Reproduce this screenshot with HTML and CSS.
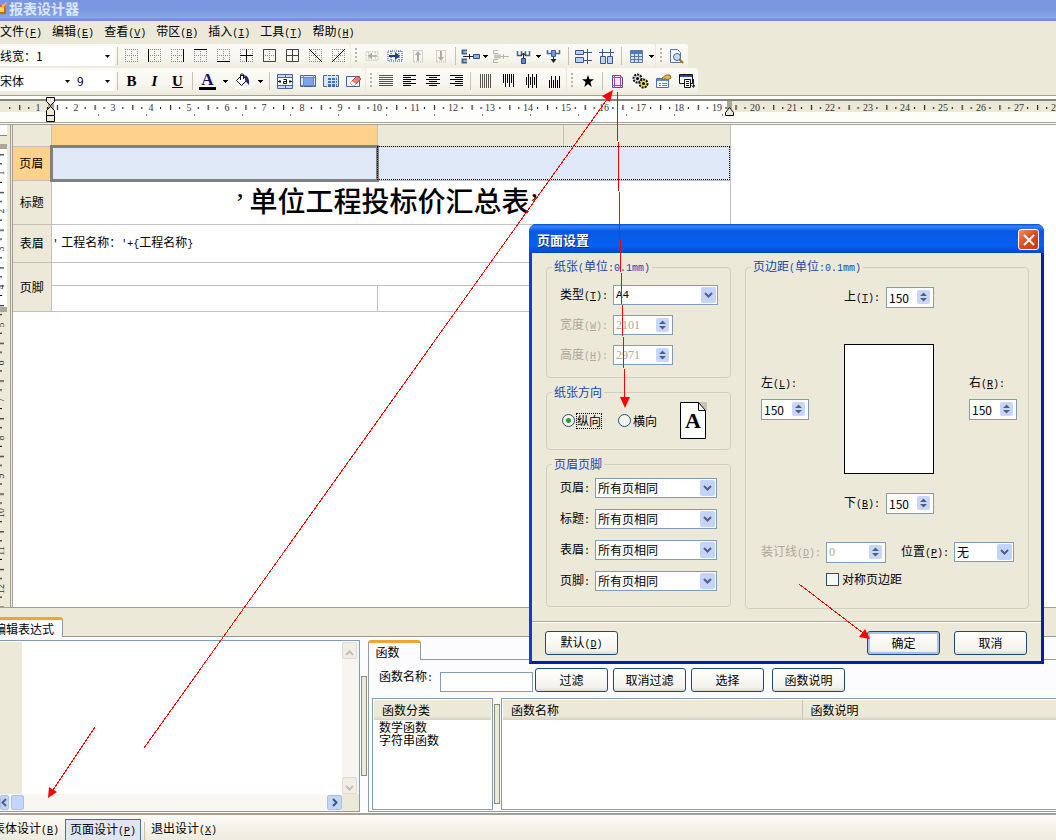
FILE: index.html
```html
<!DOCTYPE html>
<html lang="zh-CN">
<head>
<meta charset="utf-8">
<title>报表设计器</title>
<link rel="stylesheet" href="styles.css">
</head>
<body>
<svg class="defs" aria-hidden="true">
  <defs>
    <symbol id="dots" viewBox="0 0 14 14"><path d="M0 .5H14M0 6.5H14M0 12.5H14M.5 0V13M6.5 0V13M12.5 0V13" stroke="#888" stroke-dasharray="1 1" fill="none"/></symbol>
    <symbol id="tri" viewBox="0 0 5 3"><path d="M0 0H5V1H4V2H3V3H2V2H1V1H0Z"/></symbol>
    <symbol id="spin" viewBox="0 0 13 14"><path d="M3 6 6.500 2.500 10 6M3 8 6.500 11.500 10 8" fill="#4d6185"/></symbol>
    <symbol id="insert" viewBox="0 0 16 14"><path d="M1 2H15V12H1ZM4 2V12M12 2V12" stroke="currentColor" stroke-dasharray="1 1" fill="none"/><path d="M2 6H8V3L13 7 8 11V8H2Z" fill="currentColor"/></symbol>
    <symbol id="cells" viewBox="0 0 16 14"><path d="M.5 1.500H15.500V12.500H.5Z" fill="#dce8fa" stroke="#46628f"/></symbol>
  </defs>
</svg>

<div class="app">
  <header class="titlebar">
    <svg width="8" height="14" viewBox="0 0 8 14"><path d="M0 4H6V13H0Z" fill="#c46a17"/><path d="M0 6H4V11H0Z" fill="#ffd45e"/><path d="M1 5 6 1 7 3 3 7Z" fill="#ffb02e"/></svg>
    <h1>报表设计器</h1>
  </header>

  <nav class="menubar">
    <button>文件<span class="lat">(<u>F</u>)</span></button>
    <button>编辑<span class="lat">(<u>E</u>)</span></button>
    <button>查看<span class="lat">(<u>V</u>)</span></button>
    <button>带区<span class="lat">(<u>B</u>)</span></button>
    <button>插入<span class="lat">(<u>I</u>)</span></button>
    <button>工具<span class="lat">(<u>T</u>)</span></button>
    <button>帮助<span class="lat">(<u>H</u>)</span></button>
  </nav>

  <div class="toolrow">
    <div class="toolbar">
      <select class="flat line-width" aria-label="线宽"><option>线宽：1</option></select>
      <i class="sep small"></i>
      <button class="tb" aria-label="无边框"><svg width="14" height="14"><use href="#dots"/></svg></button>
      <button class="tb" aria-label="左边框"><svg width="14" height="14"><use href="#dots"/><path d="M.5 0V13" stroke="#000"/></svg></button>
      <button class="tb" aria-label="右边框"><svg width="14" height="14"><use href="#dots"/><path d="M12.500 0V13" stroke="#000"/></svg></button>
      <button class="tb" aria-label="上边框"><svg width="14" height="14"><use href="#dots"/><path d="M0 .5H13" stroke="#000"/></svg></button>
      <button class="tb" aria-label="下边框"><svg width="14" height="14"><use href="#dots"/><path d="M0 12.500H13" stroke="#000"/></svg></button>
      <button class="tb" aria-label="内边框"><svg width="14" height="14"><use href="#dots"/><path d="M0 6.500H13M6.500 0V13" stroke="#000"/></svg></button>
      <button class="tb" aria-label="外边框"><svg width="14" height="14"><use href="#dots"/><path d="M.5 .5H12.500V12.500H.5Z" fill="none" stroke="#444"/></svg></button>
      <button class="tb" aria-label="全部边框"><svg width="14" height="14"><path d="M.5 .5H12.500V12.500H.5ZM0 6.500H13M6.500 0V13" fill="none" stroke="#444"/></svg></button>
      <button class="tb" aria-label="左斜线"><svg width="14" height="14"><use href="#dots"/><path d="M0 0 13 13" stroke="#000"/></svg></button>
      <button class="tb" aria-label="右斜线"><svg width="14" height="14"><use href="#dots"/><path d="M13 0 0 13" stroke="#000"/></svg></button>
    </div>
    <div class="toolbar">
      <i class="grip"></i>
      <button class="tb off" aria-label="左移"><svg width="14" height="12"><g transform="matrix(-1 0 0 1 14 0)"><use href="#insert" width="14" height="12"/></g></svg></button>
      <button class="tb blue" aria-label="右移"><svg width="16" height="14"><use href="#insert"/></svg></button>
      <button class="tb off" aria-label="上移"><svg width="12" height="14"><path d="M1.500 1.500H10.500V13H1.500Z" stroke="#aaa" stroke-dasharray="1 1" fill="none"/><path d="M6 2 9 6H7V12H5V6H3Z" fill="#aaa"/></svg></button>
      <button class="tb off" aria-label="下移"><svg width="12" height="14"><path d="M1.500 1.500H10.500V13H1.500Z" stroke="#aaa" stroke-dasharray="1 1" fill="none"/><path d="M6 12 9 8H7V2H5V8H3Z" fill="#aaa"/></svg></button>
      <i class="sep"></i>
      <button class="tb" aria-label="拆分列"><svg width="19" height="15"><path d="M6 1.500H1.500V4.500H6M6 10.500H1.500V13.500H6" fill="none" stroke="#46628f" stroke-width="2"/><path d="M2 7.500H12M8.500 5V10" stroke="#222"/><path d="M12.500 5.500H18.500V9.500H12.500Z" fill="#8fb0ea" stroke="#2f4f8c"/></svg></button>
      <button class="drop" aria-label="拆分列选项"><svg width="5" height="3"><use href="#tri"/></svg></button>
      <button class="tb off" aria-label="合并列"><svg width="17" height="15"><path d="M6 1.500H1.500V4.500H6M6 10.500H1.500V13.500H6M8 7.500H17M11.500 5V10" fill="none" stroke="#b5b3aa"/><path d="M2 5.500H9V9.500H2Z" fill="#c9c7bd"/></svg></button>
      <button class="tb" aria-label="拆分行"><svg width="15" height="15"><path d="M1.500 2V6.500H5.500V2M9.500 2V6.500H13.500V2" fill="none" stroke="#46628f" stroke-width="1.500"/><path d="M7.500 4V10M5 7 7.500 4 10 7" fill="none" stroke="#222"/><path d="M5.500 9.500H9.500V14.500H5.500Z" fill="#5e86d2" stroke="#2c4470"/></svg></button>
      <button class="drop" aria-label="拆分行选项"><svg width="5" height="3"><use href="#tri"/></svg></button>
      <button class="tb" aria-label="合并行"><svg width="15" height="15"><path d="M1.500 1V4.500H5.500M13.500 1V4.500H9.500" fill="none" stroke="#46628f" stroke-width="1.500"/><path d="M5.500 1.500H9.500V7.500H5.500Z" fill="#6f95dc" stroke="#3c60a8"/><path d="M7.500 8V12" stroke="#222"/><path d="M4.500 10H10.500L7.500 14Z" fill="#222"/></svg></button>
      <i class="sep"></i>
      <button class="tb" aria-label="平均列宽"><svg width="17" height="15"><path d="M.5 1.500H8.500V5.500H.5ZM.5 8.500H8.500V13.500H.5Z" fill="#bcd1f5" stroke="#3a5684"/><path d="M12.500 0V15M9 3.500H17M9 11.500H17" stroke="#3a5684" fill="none"/></svg></button>
      <button class="tb" aria-label="平均行高"><svg width="15" height="15"><path d="M1.500 7.500H6.500V14.500H1.500ZM8.500 7.500H13.500V14.500H8.500Z" fill="#bcd1f5" stroke="#3a5684"/><path d="M0 3.500H15M3.500 0V7M11.500 0V7" stroke="#3a5684"/></svg></button>
      <i class="sep"></i>
      <button class="tb" aria-label="表格"><svg width="14" height="13"><path d="M.5 .5H12.500V12.500H.5Z" fill="#cfdff8" stroke="#5d779f"/><path d="M1 3.500H12M1 6.500H12M1 9.500H12M4.500 1V12M8.500 1V12" stroke="#5d779f"/><path d="M1 1H12V3H1Z" fill="#4f79c4"/></svg></button>
      <button class="drop" aria-label="表格选项"><svg width="5" height="3"><use href="#tri"/></svg></button>
    </div>
    <div class="toolbar">
      <i class="grip"></i>
      <button class="tb" aria-label="打印预览"><svg width="15" height="15"><path d="M1.500 .5H8.500L11.500 3.500V13.500H1.500Z" fill="#f4f8ff" stroke="#5b7299"/><circle cx="8" cy="8" r="3.500" fill="#bfe0f2" stroke="#4b6385"/><path d="M10.500 10.500 14 14" stroke="#a3701c" stroke-width="2"/></svg></button>
    </div>
  </div>

  <div class="toolrow second">
    <div class="toolbar">
      <select class="flat font-name" aria-label="字体"><option>宋体</option></select>
      <select class="flat font-size" aria-label="字号"><option>9</option></select>
      <i class="sep small"></i>
      <button class="tb glyph bold">B</button>
      <button class="tb glyph italic">I</button>
      <button class="tb glyph under">U</button>
      <i class="sep"></i>
      <button class="tb glyph color">A</button>
      <button class="drop wide" aria-label="字体颜色选项"><svg width="5" height="3"><use href="#tri"/></svg></button>
      <button class="tb" aria-label="填充颜色"><svg width="16" height="16"><path d="M1.500 7.500 7 2 12 7 6.500 12.500Z" fill="#fff" stroke="#112"/><path d="M5.500 7V1.500Q7 0 8.500 1.500V6" fill="none" stroke="#112"/><path d="M9 2Q15 3 14 12L10.500 8Z" fill="#20286e"/><path d="M0 13H15V16H0Z" fill="#fff"/></svg></button>
      <button class="drop wide" aria-label="填充颜色选项"><svg width="5" height="3"><use href="#tri"/></svg></button>
      <i class="sep"></i>
      <button class="tb" aria-label="合并居中"><svg width="16" height="15"><path d="M.5 .5H15.500V14.500H.5Z" fill="#c9dbf8" stroke="#46628f"/><path d="M1 4H15V11H1Z" fill="#fff"/><path d="M1 3.500H15M1 11.500H15M8.500 1V3M8.500 12V14" stroke="#46628f"/><path d="M1 7.500H4M3 6V9M15 7.500H12M13 6V9" stroke="#111" fill="none"/><path d="M6.500 5.500H9.500V9.500H6.500V7.500H9" fill="none" stroke="#111"/></svg></button>
      <button class="tb" aria-label="合并"><svg width="16" height="14"><use href="#cells"/><path d="M1 3.500H15M3.500 1V13M13.500 1V13M1 11.500H15" stroke="#6c89bd"/><path d="M4 4H13V11H4Z" fill="#7ba4ee"/></svg></button>
      <button class="tb" aria-label="拆分"><svg width="16" height="14"><use href="#cells"/><path d="M4 4H14V12H4Z" fill="#3f6fc9"/><path d="M1 3.500H15M1 6.500H15M1 9.500H15M4.500 1V13M8.500 1V13M12.500 1V13" stroke="#d8e4fa"/></svg></button>
      <button class="tb" aria-label="清除"><svg width="17" height="14"><path d="M1.500 2.500H14.500V12.500H1.500Z" fill="#eef3fc" stroke="#46628f"/><path d="M5 9 12 2 16 5 9 12Z" fill="#ee7b7b" stroke="#b44b4b"/><path d="M5 9 7 7 11 10 9 12Z" fill="#fff"/></svg></button>
    </div>
    <div class="toolbar">
      <i class="grip"></i>
      <button class="tb" aria-label="两端对齐"><svg width="15" height="12"><path d="M0 .5H14M0 2.500H14M0 4.500H14M0 6.500H14M0 8.500H14M0 10.500H14" stroke="#555"/></svg></button>
      <button class="tb" aria-label="左对齐"><svg width="14" height="12"><path d="M0 .5H13M0 2.500H8M0 4.500H13M0 6.500H8M0 8.500H13M0 10.500H8" stroke="#000"/></svg></button>
      <button class="tb" aria-label="居中"><svg width="14" height="12"><path d="M0 .5H14M3 2.500H11M0 4.500H14M3 6.500H11M0 8.500H14M3 10.500H11" stroke="#000"/></svg></button>
      <button class="tb" aria-label="右对齐"><svg width="14" height="12"><path d="M1 .5H14M6 2.500H14M1 4.500H14M6 6.500H14M1 8.500H14M6 10.500H14" stroke="#000"/></svg></button>
      <i class="sep"></i>
      <button class="tb" aria-label="垂直分散"><svg width="12" height="14"><path d="M.5 0V14M2.500 0V14M4.500 0V14M6.500 0V14M8.500 0V14M10.500 0V14" stroke="#555"/></svg></button>
      <button class="tb" aria-label="靠上"><svg width="12" height="14"><path d="M.5 0V9M2.500 0V13M4.500 0V9M6.500 0V13M8.500 0V9M10.500 0V13" stroke="#000"/></svg></button>
      <button class="tb" aria-label="垂直居中"><svg width="12" height="14"><path d="M.5 3V11M2.500 0V14M4.500 3V11M6.500 0V14M8.500 3V11M10.500 0V14" stroke="#000"/></svg></button>
      <button class="tb" aria-label="靠下"><svg width="12" height="14"><path d="M.5 6V14M2.500 2V14M4.500 6V14M6.500 2V14M8.500 6V14M10.500 2V14" stroke="#000"/></svg></button>
    </div>
    <div class="toolbar">
      <i class="grip"></i>
      <button class="tb" aria-label="收藏"><svg width="12" height="12" viewBox="0 0 12 12"><path d="M6 0 7.500 4.200H12L8.400 7 9.700 12 6 9 2.300 12 3.600 7 0 4.200H4.500Z"/></svg></button>
      <i class="sep"></i>
      <button class="tb" aria-label="页面设置"><svg width="13" height="15"><path d="M1.500 1.500H8.500L11.500 4V13.500H1.500Z" fill="#f3e6fa" stroke="#4f4a92"/><path d="M3.500 1V14M9.500 1V14M1 3.500H12M1 11.500H12" stroke="#b63fb0"/></svg></button>
      <button class="tb" aria-label="选项"><svg width="17" height="16"><circle cx="5.500" cy="5.500" r="4" fill="#ddd" stroke="#111" stroke-width="2" stroke-dasharray="2 1"/><circle cx="5.500" cy="5.500" r="1.500"/><circle cx="11.500" cy="10.500" r="4" fill="#f1e26a" stroke="#111" stroke-width="2" stroke-dasharray="2 1"/><circle cx="11.500" cy="10.500" r="1.500"/></svg></button>
      <button class="tb" aria-label="属性"><svg width="16" height="15"><path d="M.5 4.500H12.500V13.500H.5Z" fill="#fff" stroke="#4a6fae"/><path d="M1 5H12V7H1Z" fill="#5f8bd8"/><path d="M3 9.500H5M6 9.500H11M3 11.500H5M6 11.500H11" stroke="#6c84ab"/><path d="M6 4 10 1H14L15 4 11 6 9 4.500 7 6Z" fill="#e6b949" stroke="#8a661b"/></svg></button>
      <button class="tb" aria-label="窗口"><svg width="16" height="15"><path d="M.5 .5H13.500V9.500H.5Z" fill="#fff" stroke="#111"/><path d="M1 1H13V3H1Z" fill="#2d4a9a"/><path d="M5.500 5.500H11.500V13.500H5.500Z" fill="#fff" stroke="#111"/><path d="M7 7.500H10M7 9.500H10M7 11.500H10" stroke="#111"/><path d="M14.500 5V13M12.500 11 14.500 13.500 16 11" fill="none" stroke="#17236b"/></svg></button>
    </div>
  </div>

  <svg class="hruler" aria-hidden="true">
    <defs>
      <pattern id="hticks" x="38" y="0" width="37.700" height="30" patternUnits="userSpaceOnUse"><path d="M9 12h1v2h-1ZM19 10h1v5h-1ZM28 12h1v2h-1Z"/></pattern>
      <pattern id="tabs" x="98" y="0" width="48" height="30" patternUnits="userSpaceOnUse"><path d="M0 19h1v2h-1Z" fill="#777"/></pattern>
    </defs>
    <rect width="100%" height="30" fill="#fdfdfa"/>
    <rect width="100%" height="1" fill="#a3a196"/>
    <rect y="4" width="100%" height="2" fill="#85857a"/>
    <rect y="6" width="100%" height="11" fill="#ece9d8"/>
    <rect x="50" y="6" width="677" height="11" fill="#fff"/>
    <rect x="48" y="6" width="6" height="8" fill="#aca899"/>
    <rect x="727" y="6" width="5" height="8" fill="#aca899"/>
    <rect y="27" width="100%" height="1" fill="#a3a196"/>
    <rect y="29" width="100%" height="1" fill="#a3a196"/>
    <rect width="100%" height="30" fill="url(#hticks)" shape-rendering="crispEdges"/>
    <rect x="98" width="630" height="30" fill="url(#tabs)"/>
    <g class="nums">
      <text x="38" y="16">1</text><text x="76" y="16">2</text><text x="113" y="16">3</text><text x="151" y="16">4</text><text x="189" y="16">5</text><text x="227" y="16">6</text><text x="264" y="16">7</text><text x="302" y="16">8</text><text x="340" y="16">9</text><text x="377" y="16">10</text><text x="415" y="16">11</text><text x="453" y="16">12</text><text x="490" y="16">13</text><text x="528" y="16">14</text><text x="566" y="16">15</text><text x="604" y="16">16</text><text x="641" y="16">17</text><text x="679" y="16">18</text><text x="717" y="16">19</text><text x="755" y="16">20</text><text x="792" y="16">21</text><text x="830" y="16">22</text><text x="868" y="16">23</text><text x="905" y="16">24</text><text x="943" y="16">25</text><text x="981" y="16">26</text><text x="1019" y="16">27</text><text x="1056" y="16">28</text>
    </g>
    <path d="M46.500 2.500H54.500V6.500L50.500 10.500 46.500 6.500ZM50.500 11.500 54.500 15.500V20.500H46.500V15.500ZM46.500 20.500H54.500V26.500H46.500ZM729.500 12.500 733.500 17.500V20.500H725.500V17.500Z" fill="#ece9d8" stroke="#000"/>
  </svg>

  <main class="workspace">
    <svg class="vruler" aria-hidden="true">
      <defs><pattern id="vticks" x="0" y="48" width="10" height="37.700" patternUnits="userSpaceOnUse"><path d="M0 9H2V10H0ZM0 19H4V20H0ZM0 28H2V29H0Z"/></pattern></defs>
      <rect width="7" height="100%" fill="#ece9d8"/>
      <rect width="7" height="10" fill="#fff"/>
      <rect y="10" width="7" height="1" fill="#85857a"/>
      <rect y="24" width="7" height="158" fill="#fff"/>
      <rect y="19" width="7" height="5" fill="#aca899"/>
      <rect y="182" width="7" height="5" fill="#aca899"/>
      <rect y="22" width="7" height="100%" fill="url(#vticks)" shape-rendering="crispEdges"/>
      <g class="nums">
        <text transform="translate(4 48) rotate(-90)">1</text><text transform="translate(4 86) rotate(-90)">2</text><text transform="translate(4 124) rotate(-90)">3</text><text transform="translate(4 162) rotate(-90)">4</text><text transform="translate(4 200) rotate(-90)">5</text><text transform="translate(4 238) rotate(-90)">6</text><text transform="translate(4 275) rotate(-90)">7</text><text transform="translate(4 313) rotate(-90)">8</text><text transform="translate(4 351) rotate(-90)">9</text><text transform="translate(4 388) rotate(-90)">10</text><text transform="translate(4 426) rotate(-90)">11</text><text transform="translate(4 464) rotate(-90)">12</text>
      </g>
    </svg>
    <div class="canvas">
      <table class="report">
        <colgroup><col class="c-band"><col class="c-a"><col class="c-b"><col class="c-c"></colgroup>
        <tr class="r-head"><th></th><th class="hot"></th><th></th><th></th></tr>
        <tr class="r-page"><th class="hot">页眉</th><td class="current"></td><td class="selected" colspan="2"></td></tr>
        <tr class="r-title"><th>标题</th><td class="report-title" colspan="3">’ 单位工程投标价汇总表’</td></tr>
        <tr class="r-table"><th>表眉</th><td colspan="3"><span class="lat">'</span> 工程名称：<span class="lat">'+{</span>工程名称<span class="lat">}</span></td></tr>
        <tr class="r-foot"><th rowspan="2">页脚</th><td colspan="3"></td></tr>
        <tr class="r-foot2"><td></td><td></td><td></td></tr>
      </table>
    </div>
  </main>

  <div class="tabstrip"><button class="tab">编辑表达式</button></div>

  <section class="bottom">
    <div class="editor">
      <div class="gutter"></div>
      <textarea aria-label="表达式"></textarea>
      <div class="vscroll">
        <button aria-label="向上"><svg width="9" height="6"><path d="M1 5 4.500 1.500 8 5" fill="none" stroke="#c5c2b4" stroke-width="2"/></svg></button>
        <button aria-label="向下"><svg width="9" height="6"><path d="M1 1 4.500 4.500 8 1" fill="none" stroke="#c5c2b4" stroke-width="2"/></svg></button>
      </div>
      <div class="hscroll">
        <button aria-label="向左"><svg width="6" height="9"><path d="M5 1 1.500 4.500 5 8" fill="none" stroke="#4d6185" stroke-width="2"/></svg></button>
        <i class="thumb"></i>
        <button class="to-end" aria-label="向右"><svg width="6" height="9"><path d="M1 1 4.500 4.500 1 8" fill="none" stroke="#3c5486" stroke-width="2"/></svg></button>
      </div>
      <div class="corner"></div>
    </div>
    <i class="splitter"></i>
    <div class="functions">
      <div class="fn-tabs"><button class="tab">函数</button></div>
      <div class="fn-body">
        <div class="filter">
          <label for="fn">函数名称<span class="lat">:</span></label>
          <input id="fn" type="text">
          <div class="filter-buttons">
            <button class="btn">过滤</button>
            <button class="btn">取消过滤</button>
            <button class="btn">选择</button>
            <button class="btn">函数说明</button>
          </div>
        </div>
        <div class="lists">
          <div class="listbox">
            <div class="list-head">函数分类</div>
            <ul><li>数学函数</li><li>字符串函数</li></ul>
          </div>
          <i class="splitter"></i>
          <div class="listbox wide">
            <table class="fn-table"><tr><th class="c-name">函数名称</th><th>函数说明</th></tr></table>
          </div>
        </div>
      </div>
    </div>
  </section>

  <footer class="statusbar">
    <button>表体设计<span class="lat">(<u>B</u>)</span></button>
    <button class="active">页面设计<span class="lat">(<u>P</u>)</span></button>
    <i class="sep"></i>
    <button>退出设计<span class="lat">(<u>X</u>)</span></button>
  </footer>
</div>

<div class="dialog" role="dialog" aria-labelledby="dlg-title">
  <div class="dlg-bar">
    <h2 id="dlg-title">页面设置</h2>
    <button class="close" aria-label="关闭"><svg width="12" height="12"><path d="M1 1 11 11M11 1 1 11" stroke="#fff" stroke-width="2"/></svg></button>
  </div>
  <div class="dlg-body">
    <div class="columns">
      <div class="left">
        <fieldset class="paper">
          <legend>纸张<span class="lat">(</span>单位<span class="lat">:0.1mm)</span></legend>
          <label for="type">类型<span class="lat">(<u>T</u>):</span></label>
          <select id="type" class="combo lat-text"><option>A4</option></select>
          <label for="w" class="dim">宽度<span class="lat">(<u>W</u>):</span></label>
          <div class="spinner long dim"><input id="w" type="text" value="2101" disabled><button aria-label="调整宽度"><svg width="13" height="14"><use href="#spin"/></svg></button></div>
          <label for="h" class="dim">高度<span class="lat">(<u>H</u>):</span></label>
          <div class="spinner long dim"><input id="h" type="text" value="2971" disabled><button aria-label="调整高度"><svg width="13" height="14"><use href="#spin"/></svg></button></div>
        </fieldset>
        <fieldset class="orient">
          <legend>纸张方向</legend>
          <label class="focus"><input type="radio" name="dir" checked><span>纵向</span></label>
          <label><input type="radio" name="dir"><span>横向</span></label>
          <svg class="sheet" width="27" height="37"><path d="M18 0H27V9Z" fill="#c8c5b8"/><path d="M.5 .5H18.500L25.500 8.500V36.500H.5Z" fill="#fff" stroke="#000"/><path d="M18.500 .5V8.500H25.500" fill="none" stroke="#000"/><text x="13" y="26" text-anchor="middle">A</text></svg>
        </fieldset>
        <fieldset class="bands">
          <legend>页眉页脚</legend>
          <label for="b1">页眉<span class="lat">:</span></label><select id="b1" class="combo"><option>所有页相同</option></select>
          <label for="b2">标题<span class="lat">:</span></label><select id="b2" class="combo"><option>所有页相同</option></select>
          <label for="b3">表眉<span class="lat">:</span></label><select id="b3" class="combo"><option>所有页相同</option></select>
          <label for="b4">页脚<span class="lat">:</span></label><select id="b4" class="combo"><option>所有页相同</option></select>
        </fieldset>
      </div>
      <fieldset class="margins">
        <legend>页边距<span class="lat">(</span>单位<span class="lat">:0.1mm)</span></legend>
        <div class="pair top"><label for="mt">上<span class="lat">(<u>T</u>):</span></label><div class="spinner"><input id="mt" type="text" value="150"><button aria-label="调整上边距"><svg width="13" height="14"><use href="#spin"/></svg></button></div></div>
        <div class="middle">
          <div class="side"><label for="ml">左<span class="lat">(<u>L</u>):</span></label><div class="spinner"><input id="ml" type="text" value="150"><button aria-label="调整左边距"><svg width="13" height="14"><use href="#spin"/></svg></button></div></div>
          <div class="preview"></div>
          <div class="side"><label for="mr">右<span class="lat">(<u>R</u>):</span></label><div class="spinner"><input id="mr" type="text" value="150"><button aria-label="调整右边距"><svg width="13" height="14"><use href="#spin"/></svg></button></div></div>
        </div>
        <div class="pair"><label for="mb">下<span class="lat">(<u>B</u>):</span></label><div class="spinner"><input id="mb" type="text" value="150"><button aria-label="调整下边距"><svg width="13" height="14"><use href="#spin"/></svg></button></div></div>
        <div class="binding">
          <label for="gut" class="dim">装订线<span class="lat">(<u>D</u>):</span></label>
          <div class="spinner long dim"><input id="gut" type="text" value="0" disabled><button aria-label="调整装订线"><svg width="13" height="14"><use href="#spin"/></svg></button></div>
          <label for="pos">位置<span class="lat">(<u>P</u>):</span></label>
          <select id="pos" class="combo"><option>无</option></select>
        </div>
        <label class="mirror"><input type="checkbox">对称页边距</label>
      </fieldset>
    </div>
    <div class="actions">
      <button class="btn">默认<span class="lat">(<u>D</u>)</span></button>
      <button class="btn primary">确定</button>
      <button class="btn">取消</button>
    </div>
  </div>
</div>

<svg class="notes" width="1056" height="840" aria-hidden="true">
  <path d="M144 748 608 98M95 727 53 790M617 91 620 240 625 400M799 584 863 633" fill="none" stroke="#f00" shape-rendering="crispEdges"/>
  <path d="M613 90 602 96 610 102ZM48 798 49 787 57 792ZM625 408 620 397 630 397ZM870 639 859 637 865 629Z" fill="#f00"/>
</svg>
</body>
</html>
```
FILE: styles.css
```css
* { box-sizing: border-box; }

body {
  margin: 0;
  overflow: hidden;
  background: #ece9d8;
  color: #000;
  font: 12px/14px "Noto Sans CJK SC", sans-serif;
}

button, input, select, textarea { margin: 0; font: inherit; color: inherit; }
button { padding: 0; border: 0; background: none; white-space: nowrap; }
select { appearance: none; border-radius: 0; }

.defs { position: absolute; width: 0; height: 0; }
.lat { font-family: "Liberation Mono", monospace; font-size: 10px; }

.app { display: flex; flex-direction: column; min-height: 100vh; }

/* title and menu */
.titlebar {
  display: flex;
  align-items: center;
  gap: 1px;
  height: 21px;
  padding-bottom: 5px;
  background: linear-gradient(#7b96e0 0, #7a97e1 45%, #84a9e8 85%, #7b89e3 90%);
}
.titlebar h1 { margin: 0; font-size: 14px; line-height: 16px; font-weight: 700; color: #dce7fb; }

.menubar { display: flex; gap: 10px; height: 23px; align-items: center; }

/* toolbars */
.toolrow { display: flex; height: 24px; gap: 1px; }
.toolrow.second { height: 27px; padding-bottom: 1px; }
.toolbar {
  display: flex;
  align-items: center;
  background: linear-gradient(#fbfaf7, #f7f6ef 60%, #eeecdd);
  border-radius: 0 3px 3px 0;
}
.flat {
  height: 20px;
  padding: 0;
  border: 0;
  background: #fff url("data:image/svg+xml,%3Csvg xmlns='http://www.w3.org/2000/svg' width='5' height='3'%3E%3Cpath d='M0 0H5L2.500 3Z'/%3E%3C/svg%3E") no-repeat right 5px center;
}
.line-width { width: 115px; }
.font-name { width: 75px; }
.font-size { width: 40px; padding-left: 2px; }
.tb { display: flex; width: 23px; height: 22px; align-items: center; justify-content: center; }
.tb svg { display: block; }
.off { color: #aaa; }
.blue { color: #1f3c8c; }
.drop { display: flex; width: 7px; height: 22px; align-items: center; justify-content: center; }
.drop.wide { width: 12px; }
.sep { flex: none; width: 7px; height: 18px; background: linear-gradient(#c5c2b2, #c5c2b2) no-repeat center / 1px 100%; }
.sep.small { width: 5px; }
.grip { flex: none; width: 9px; height: 16px; background: repeating-linear-gradient(#b8b5a4 0 2px, transparent 2px 4px) no-repeat center / 2px 100%; }
.glyph { font: 700 15px/16px "Liberation Serif", serif; }
.italic { font-style: italic; }
.under { text-decoration: underline; }
.glyph.color { width: 17px; height: 17px; margin: 0 3px; border-bottom: 3px solid #000; color: #12125e; font-size: 17px; line-height: 13px; }

/* rulers */
.hruler { display: block; flex: none; width: 100%; height: 30px; }
.nums { font: 10px "Liberation Serif", serif; fill: #333; text-anchor: middle; }
.vruler { flex: none; width: 11px; height: 100%; border-right: 1px solid #a3a196; }

/* report canvas */
.workspace { display: flex; gap: 1px; flex: 1 0 483px; height: 483px; border-bottom: 1px solid #a3a196; }
.canvas { flex: 1; background: #fff; border-left: 1px solid #a3a196; }
.report { width: 717px; table-layout: fixed; border-collapse: collapse; }
.c-band { width: 38px; }
.c-a { width: 326px; }
.c-b { width: 186px; }
.c-c { width: 167px; }
.report th { padding: 0; border: 1px solid #c4c2b8; border-left: 0; background: #ece9d8; font-weight: 400; }
.report td { padding: 0 0 0 1px; border: 1px solid #c0c0c0; }
.report .hot { background: #ffd28c; }
.r-head { height: 21px; }
.r-head th { border-top: 0; }
.r-page { height: 34px; }
.r-title { height: 44px; }
.r-table { height: 38px; }
.r-foot { height: 23px; }
.r-foot2 { height: 26px; }
.report .current { border: 3px solid #808080; background: #dfe8f6; }
.report .selected { background: #dfe8f6; outline: 1px dotted #000; outline-offset: -1px; }
.report .report-title { padding-right: 8px; font: 500 28px/36px "Liberation Serif", "Noto Sans CJK SC", serif; text-align: center; }

/* tabs */
.tabstrip { display: flex; align-items: flex-end; height: 29px; border-bottom: 1px solid #919b9c; }
.tab { border: 1px solid #919b9c; border-top: 3px solid #f0a52c; border-bottom: 0; border-radius: 3px 3px 0 0; background: #fcfcfe; }
.tabstrip .tab { margin-left: -6px; padding: 0 8px 0 0; height: 20px; margin-bottom: -1px; border-left: 0; }

/* bottom panels */
.bottom { display: flex; gap: 1px; align-items: flex-start; padding: 3px 0 1px; background: #fcfcfe; border-bottom: 2px solid #a3a196; }
.editor {
  display: grid;
  flex: none;
  grid-template: 1fr 17px / 22px 1fr 17px;
  width: 360px;
  height: 172px;
  padding-top: 1px;
  border: 1px solid #7f9db9;
  border-left: 0;
  background: #fff;
}
.gutter { background: #ece9d8; }
.editor textarea { width: 100%; height: 100%; border: 0; resize: none; outline: 0; background: #fff; }
.vscroll { display: flex; flex-direction: column; justify-content: space-between; background: #f6f5ef; }
.vscroll button { width: 15px; height: 17px; border: 1px solid #dedbcd; border-radius: 2px; background: #f1efe5; }
.hscroll { display: flex; grid-column: 1 / 3; gap: 2px; padding-top: 1px; background: #f8f7f2; }
.hscroll button, .thumb { width: 15px; height: 15px; border: 1px solid #a9c0ee; border-radius: 2px; background: #c4d5fb; }
.hscroll button { display: flex; align-items: center; justify-content: center; }
.hscroll button:first-child { width: 9px; justify-content: flex-start; }
.thumb { width: 13px; }
.to-end { margin-left: auto; }
.corner { background: #ece9d8; }
.splitter { flex: none; align-self: center; width: 6px; height: 100px; border: 1px solid #8b8a83; background: #ece9d8; }

.functions { flex: 1; min-width: 0; }
.fn-tabs { display: flex; height: 20px; border-bottom: 1px solid #919b9c; }
.fn-tabs .tab { width: 53px; height: 20px; padding-right: 14px; }
.fn-body { padding: 8px 0 1px 3px; border-left: 1px solid #919b9c; border-bottom: 1px solid #919b9c; }
.filter { display: flex; align-items: flex-end; height: 24px; padding-left: 7px; }
.filter label { width: 61px; padding-bottom: 6px; }
.filter input { width: 93px; height: 20px; border: 1px solid #7f9db9; background: #fff; }
.filter-buttons { display: flex; gap: 5px; margin-left: 2px; }
.btn { width: 73px; height: 24px; border: 1px solid #1c4a7e; border-radius: 3px; background: linear-gradient(#fff, #f3f2ec 85%, #dcd8cc); }
.filter-buttons .btn:last-child { margin-left: 3px; }
.lists { display: flex; gap: 1px; margin-top: 6px; }
.listbox { width: 121px; height: 112px; padding: 1px; border: 1px solid #7f9db9; background: #fff; }
.listbox.wide { flex: 1; border-right: 0; padding-right: 0; }
.list-head, .fn-table th { height: 20px; background: linear-gradient(#ece9d8 80%, #d6d2c2); font-weight: 400; text-align: left; }
.list-head { padding: 3px 8px; }
.listbox ul { margin: 0; padding: 0 5px; list-style: none; line-height: 13px; }
.fn-table { width: 100%; border-collapse: collapse; }
.fn-table th { padding: 0 8px; }
.fn-table .c-name { width: 299px; border-right: 1px solid #c8c5b4; }

.statusbar { display: flex; align-items: flex-end; height: 25px; margin-left: -7px; background: linear-gradient(#fbfaf6, #eeecdf); }
.statusbar button { height: 21px; }
.statusbar .active { width: 76px; margin-left: 6px; border: 1px solid #4b6da8; border-bottom: 0; background: #e1e6ee; }
.statusbar .sep + button { margin-left: 3px; }

/* dialog */
.dialog {
  position: absolute;
  left: 529px;
  top: 224px;
  width: 515px;
  border: 3px solid #0a3fd0;
  border-top: 0;
  border-right-color: #0420a0;
  border-bottom-color: #0420a0;
  border-radius: 8px 8px 0 0;
  background: #0a52e0;
}
.dlg-bar {
  display: flex;
  align-items: center;
  justify-content: space-between;
  height: 29px;
  margin: 0 -3px;
  padding: 2px 5px 0 8px;
  border-radius: 7px 7px 0 0;
  background: linear-gradient(#0a4bd0, #2f86fb 8%, #0a58e4 25%, #0560f4 75%, #0348cc);
}
.dlg-bar h2 { margin: 0; color: #fff; font-size: 13px; line-height: 16px; text-shadow: 1px 1px #0a2a80; }
.close { display: flex; width: 21px; height: 21px; align-items: center; justify-content: center; border: 1px solid #fff; border-radius: 3px; background: linear-gradient(135deg, #ee8f70, #dd4a20 50%, #c33a10); }
.dlg-body { background: #ece9d8; }
.columns { display: grid; grid-template-columns: 185px 1fr; gap: 14px; padding: 6px 12px 12px 14px; }
.left { display: flex; flex-direction: column; gap: 7px; }
fieldset { display: grid; margin: 0; min-width: 0; border: 1px solid #d0d0bf; border-radius: 4px; }
legend { margin-left: 5px; padding: 0 2px; color: #1746b0; line-height: 14px; white-space: nowrap; }
label { white-space: nowrap; }
.dim { color: #aca899; }

.paper { grid-template-columns: 53px 1fr; gap: 10px 0; padding: 9px 12px 12px 13px; align-items: center; }
.paper legend, .bands legend { margin-left: -8px; }
.combo {
  width: 100%;
  height: 20px;
  padding: 0 18px 0 2px;
  border: 1px solid #7f9db9;
  background: #fff url("data:image/svg+xml,%3Csvg xmlns='http://www.w3.org/2000/svg' width='15' height='16'%3E%3Crect width='15' height='16' rx='2' fill='%23c3d3fa'/%3E%3Cpath d='M4 6L7.500 9.500L11 6' fill='none' stroke='%234d6185' stroke-width='2'/%3E%3C/svg%3E") no-repeat right 1px center;
}
.lat-text { font-family: "Liberation Mono", "Noto Sans CJK SC", monospace; font-size: 11px; }
.spinner { display: flex; align-items: center; width: 48px; height: 21px; border: 1px solid #7f9db9; background: #fff; padding-right: 3px; }
.spinner.long { width: 60px; }
.spinner input { flex: 1; width: 0; min-width: 0; height: 17px; padding: 0 2px; border: 0; outline: 0; background: none; }
.spinner.dim input { font: 12px "Liberation Serif", serif; color: #aca899; }
.spinner button { width: 13px; height: 14px; border-radius: 2px; background: #c8d6fa; }
.spinner svg { display: block; }
.paper .spinner { height: 20px; }

.orient { display: flex; align-items: center; padding: 3px 12px 10px 15px; }
.orient legend { margin-left: -10px; }
.orient label { display: flex; align-items: center; gap: 2px; width: 56px; }
.orient .sheet { margin-left: 6px; font: 700 22px "Liberation Serif", serif; }
.focus span { outline: 1px dotted #000; }
input[type="radio"] { appearance: none; width: 13px; height: 13px; border: 1px solid #1c5180; border-radius: 50%; background: #f4f4f0; }
input[type="radio"]:checked { background: radial-gradient(circle, #21a121 0 2px, #f4f4f0 3px); }

.bands { grid-template-columns: 35px 1fr; gap: 11px 0; padding: 7px 13px 15px 13px; align-items: center; }

.margins { display: flex; flex-direction: column; padding: 11px 11px 22px 15px; }
.margins legend { margin-left: -10px; }
.pair { display: flex; align-items: center; justify-content: center; height: 20px; }
.pair label { width: 42px; }
.middle { display: flex; align-items: center; justify-content: space-between; margin: 37px 0 19px; }
.side { display: flex; flex-direction: column; gap: 7px; margin-top: -24px; }
.preview { width: 90px; height: 130px; border: 1px solid #000; background: #fff; }
.binding { display: flex; align-items: center; height: 20px; margin-top: 29px; }
.binding label { width: 65px; }
.binding .spinner + label { width: 53px; margin-left: 15px; }
.binding .combo { width: 60px; }
.mirror { display: flex; align-items: center; gap: 3px; height: 14px; margin: 10px 0 0 65px; }
.mirror input { appearance: none; width: 13px; height: 13px; border: 1px solid #1c5180; background: #f8f8f5; }

.actions { display: flex; gap: 14px; padding: 9px 14px 6px 13px; border-top: 1px solid #aca899; box-shadow: inset 0 1px #fff; }
.actions .btn:first-child { margin-right: auto; }
.primary { box-shadow: inset 0 0 0 2px #a9c2f3; }

/* annotation arrows lie over everything */
.notes { position: absolute; left: 0; top: 0; pointer-events: none; }
```
